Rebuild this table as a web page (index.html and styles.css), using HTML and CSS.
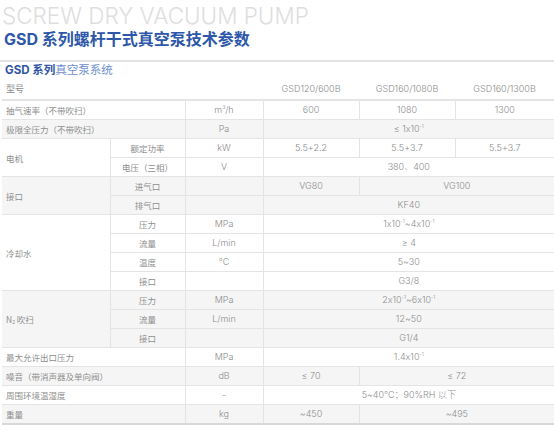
FILE: index.html
```html
<!DOCTYPE html>
<html lang="zh">
<head>
<meta charset="utf-8">
<link rel="stylesheet" href="styles.css">
</head>
<body>
<div class="page">
  <div class="en">SCREW DRY VACUUM PUMP</div>
  <h1 class="title">GSD 系列螺杆干式真空泵技术参数</h1>
  <div class="rule"></div>
  <div class="sub"><b>GSD 系列</b>真空泵系统</div>
  <table class="spec">
    <colgroup>
      <col class="c1"><col class="c2"><col class="c3"><col class="c4"><col class="c5"><col class="c6">
    </colgroup>
    <thead>
      <tr class="head"><th colspan="3" class="lbl">型号</th><th>GSD120/600B</th><th>GSD160/1080B</th><th>GSD160/1300B</th></tr>
    </thead>
    <tbody>
      <tr><td colspan="2" class="lbl">抽气速率（不带吹扫）</td><td>m<sup>3</sup>/h</td><td>600</td><td>1080</td><td>1300</td></tr>
    </tbody>
    <tbody class="alt">
      <tr><td colspan="2" class="lbl">极限全压力（不带吹扫）</td><td>Pa</td><td colspan="3">≤ 1x10<sup>-1</sup></td></tr>
    </tbody>
    <tbody>
      <tr><td rowspan="2" class="lbl">电机</td><td class="sl">额定功率</td><td>kW</td><td>5.5+2.2</td><td>5.5+3.7</td><td>5.5+3.7</td></tr>
      <tr><td class="sl">电压（三相）</td><td>V</td><td colspan="3">380、400</td></tr>
    </tbody>
    <tbody class="alt">
      <tr><td rowspan="2" class="lbl">接口</td><td class="sl">进气口</td><td></td><td>VG80</td><td colspan="2">VG100</td></tr>
      <tr><td class="sl">排气口</td><td></td><td colspan="3">KF40</td></tr>
    </tbody>
    <tbody>
      <tr><td rowspan="4" class="lbl">冷却水</td><td class="sl">压力</td><td>MPa</td><td colspan="3">1x10<sup>-1</sup>~4x10<sup>-1</sup></td></tr>
      <tr><td class="sl">流量</td><td>L/min</td><td colspan="3">≥ 4</td></tr>
      <tr><td class="sl">温度</td><td>℃</td><td colspan="3">5~30</td></tr>
      <tr><td class="sl">接口</td><td></td><td colspan="3">G3/8</td></tr>
    </tbody>
    <tbody class="alt">
      <tr><td rowspan="3" class="lbl">N<sub>2</sub> 吹扫</td><td class="sl">压力</td><td>MPa</td><td colspan="3">2x10<sup>-1</sup>~6x10<sup>-1</sup></td></tr>
      <tr><td class="sl">流量</td><td>L/min</td><td colspan="3">12~50</td></tr>
      <tr><td class="sl">接口</td><td></td><td colspan="3">G1/4</td></tr>
    </tbody>
    <tbody>
      <tr><td colspan="2" class="lbl">最大允许出口压力</td><td>MPa</td><td colspan="3">1.4x10<sup>-1</sup></td></tr>
    </tbody>
    <tbody class="alt">
      <tr><td colspan="2" class="lbl">噪音（带消声器及单向阀）</td><td>dB</td><td>≤ 70</td><td colspan="2">≤ 72</td></tr>
    </tbody>
    <tbody>
      <tr><td colspan="2" class="lbl">周围环境温湿度</td><td>-</td><td colspan="3">5~40℃；90%RH 以下</td></tr>
    </tbody>
    <tbody class="alt last">
      <tr><td colspan="2" class="lbl">重量</td><td>kg</td><td>~450</td><td colspan="2">~495</td></tr>
    </tbody>
  </table>
</div>
</body>
</html>
```

FILE: styles.css
```css
* { box-sizing: border-box; }
html, body { margin: 0; padding: 0; background: #fff; }
body {
  font-family: "Inter", "Noto Sans CJK SC", sans-serif;
  font-feature-settings: "calt" 0;
  width: 554px;
  height: 430px;
  overflow: hidden;
}
.page { display: flex; flex-direction: column; }
.en {
  font-family: "Inter", sans-serif;
  font-weight: 300;
  font-size: 22.5px;
  line-height: 28px;
  height: 28px;
  padding-top: 2px;
  padding-left: 2px;
  color: #dedede;
  white-space: nowrap;
}
.title {
  margin: 0;
  font-family: "Inter", "Noto Sans CJK SC", sans-serif;
  font-size: 16px;
  line-height: 22px;
  height: 22px;
  font-weight: 700;
  color: #2d57a8;
  padding-left: 4px;
  white-space: nowrap;
}
.rule {
  margin-top: 10px;
  height: 2px;
  background: #e2e2e2;
}
.sub {
  padding-left: 5px;
  font-size: 11.5px;
  line-height: 16px;
  height: 16px;
  color: #6f8fcf;
  font-family: "Inter", "Noto Sans CJK SC", sans-serif;
}
.sub b { color: #2f55a3; font-weight: 700; }
.spec {
  border-collapse: collapse;
  table-layout: fixed;
  width: 552px;
  margin-left: 2px;
  font-size: 9px;
  color: #8c8c8c;
}
.c1 { width: 108px; }
.c2 { width: 75px; }
.c3 { width: 78px; }
.c4 { width: 96px; }
.c5 { width: 96px; }
.c6 { width: 99px; }
.spec th {
  font-weight: 300;
  font-size: 9px;
  height: 22px;
  padding: 0;
  text-align: center;
  color: #8a8a8a;
  border-bottom: 2px solid #e4e4e4;
}
.spec th.lbl {
  text-align: left;
  padding-left: 4px;
  font-family: "Noto Sans CJK SC", sans-serif;
  font-weight: 400;
  font-size: 9px;
  color: #8a8a8a;
}
.spec td {
  height: 19px;
  padding: 0;
  text-align: center;
  font-weight: 300;
  line-height: 18px;
  border-bottom: 1px solid #e4e4e4;
  border-left: 1px solid #e4e4e4;
  white-space: nowrap;
}
.spec td.lbl {
  text-align: left;
  padding-left: 4px;
  border-left: none;
  font-family: "Noto Sans CJK SC", sans-serif;
  font-weight: 400;
  font-size: 8.5px;
  color: #8e8e8e;
}
.spec td.sl {
  font-family: "Noto Sans CJK SC", sans-serif;
  font-weight: 400;
  font-size: 8.5px;
  color: #8e8e8e;
}
.spec tbody.alt td { background: #f5f5f5; }
.spec tbody.last td { border-bottom: 2px solid #d8d8d8; }
.spec sup {
  font-size: 5px;
  vertical-align: 4px;
  line-height: 0;
}
.spec sub {
  font-size: 5px;
  vertical-align: -1px;
  line-height: 0;
}
```
